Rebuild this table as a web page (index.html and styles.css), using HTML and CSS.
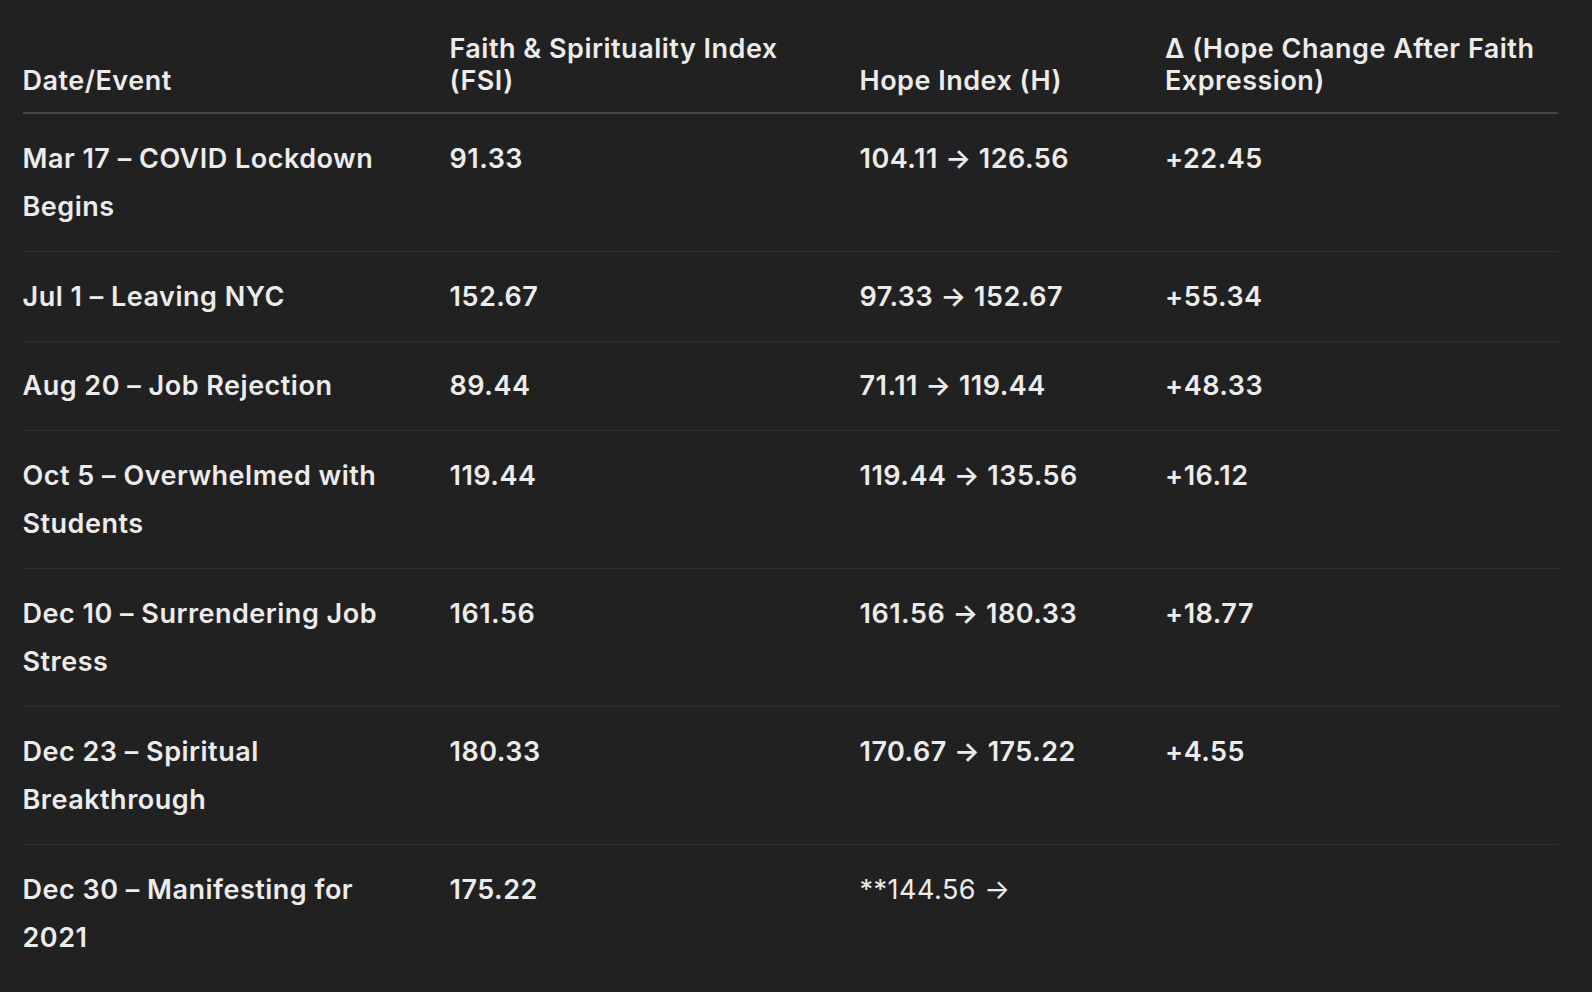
FILE: index.html
```html
<!DOCTYPE html>
<html lang="en">
<head>
<meta charset="utf-8">
<title>Faith &amp; Hope Table</title>
<link rel="stylesheet" href="styles.css">
</head>
<body>
<div class="wrap">
<table class="data">
  <colgroup>
    <col class="c1"><col class="c2"><col class="c3"><col class="c4">
  </colgroup>
  <thead>
    <tr>
      <th>Date/Event</th>
      <th>Faith &amp; Spirituality Index (FSI)</th>
      <th>Hope Index (H)</th>
      <th>Δ (Hope Change After Faith Expression)</th>
    </tr>
  </thead>
  <tbody>
    <tr><td><strong>Mar 17 – COVID Lockdown Begins</strong></td><td><strong>91.33</strong></td><td><strong>104.11 → 126.56</strong></td><td><strong>+22.45</strong></td></tr>
    <tr><td><strong>Jul 1 – Leaving NYC</strong></td><td><strong>152.67</strong></td><td><strong>97.33 → 152.67</strong></td><td><strong>+55.34</strong></td></tr>
    <tr><td><strong>Aug 20 – Job Rejection</strong></td><td><strong>89.44</strong></td><td><strong>71.11 → 119.44</strong></td><td><strong>+48.33</strong></td></tr>
    <tr><td><strong>Oct 5 – Overwhelmed with Students</strong></td><td><strong>119.44</strong></td><td><strong>119.44 → 135.56</strong></td><td><strong>+16.12</strong></td></tr>
    <tr><td><strong>Dec 10 – Surrendering Job Stress</strong></td><td><strong>161.56</strong></td><td><strong>161.56 → 180.33</strong></td><td><strong>+18.77</strong></td></tr>
    <tr><td><strong>Dec 23 – Spiritual Breakthrough</strong></td><td><strong>180.33</strong></td><td><strong>170.67 → 175.22</strong></td><td><strong>+4.55</strong></td></tr>
    <tr class="last"><td><strong>Dec 30 – Manifesting for 2021</strong></td><td><strong>175.22</strong></td><td>**144.56 →</td><td></td></tr>
  </tbody>
</table>
</div>
</body>
</html>
```
FILE: styles.css
```css
html, body {
  margin: 0;
  padding: 0;
  background: #212121;
  height: 100%;
  overflow: hidden;
}
body {
  font-family: Inter, "Noto Sans", "Liberation Sans", sans-serif;
  color: #ececec;
  font-size: 27px;
  letter-spacing: 0.5px;
}
.wrap {
  padding: 18.5px 0 0 22.5px;
}
.data {
  border-collapse: collapse;
  table-layout: fixed;
  width: 1535.5px;
}
.c1 { width: 413px; }
.c2 { width: 410px; }
.c3 { width: 305.5px; }
.c4 { width: 407px; }
.data th {
  text-align: left;
  vertical-align: bottom;
  font-weight: 600;
  line-height: 32.5px;
  padding: 14px 14px 14.5px;
  border-bottom: 2px solid #454545;
}
.data td {
  vertical-align: top;
  font-weight: 400;
  line-height: 48.5px;
  padding: 20.5px 14px 19.5px;
  border-bottom: 1px solid #303030;
}
.data strong { font-weight: 600; }
.data th:first-child, .data td:first-child { padding-left: 0; padding-right: 20px; }
.data th:last-child, .data td:last-child { padding-right: 0; }
.data tr.last td { border-bottom: none; }
```
